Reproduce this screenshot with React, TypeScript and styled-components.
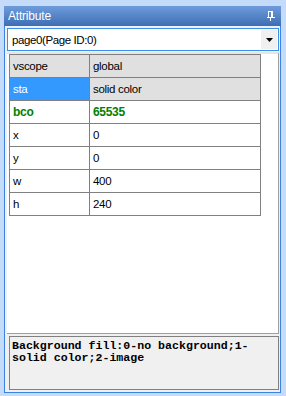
import React from "react";
import styled, { createGlobalStyle } from "styled-components";

const Global = createGlobalStyle`
  html, body { margin: 0; padding: 0; }
  body { background: #c4dbf9; }
  #root { width: 286px; height: 396px; }
`;

const Window = styled.div`
  box-sizing: border-box;
  width: 286px;
  height: 396px;
  background: #c4dbf9;
  padding: 6px 5px 3px 4px;
  display: flex;
  flex-direction: column;
  font-family: "Liberation Sans", Arial, sans-serif;
  font-size: 11px;
`;

const TitleBar = styled.div`
  height: 20px;
  flex: none;
  display: flex;
  align-items: center;
  justify-content: space-between;
  padding: 0 6px 0 4px;
  background: linear-gradient(#6e9cdc, #3e6db3);
  color: #ffffff;
  font-size: 12px;
  letter-spacing: -0.2px;
`;

const Panel = styled.div`
  flex: 1;
  display: flex;
  flex-direction: column;
  background: #f0f0f0;
  border: 1px solid #3d82e0;
  border-top: none;
  padding: 2px 1px 2px 2px;
  min-height: 0;
`;

const Combo = styled.div`
  box-sizing: border-box;
  height: 23px;
  flex: none;
  display: flex;
  align-items: center;
  justify-content: space-between;
  background: #ffffff;
  border: 1px solid #3c8fe9;
  padding: 0 1px 0 4px;
  color: #000;
  font-size: 11.5px;
  letter-spacing: -0.4px;
`;

const DropButton = styled.div`
  width: 16px;
  height: 19px;
  background: #f0f0f0;
  display: flex;
  align-items: center;
  justify-content: center;
`;

const GridArea = styled.div`
  flex: 1;
  margin-top: 1px;
  background: #ffffff;
  border-top: 2px solid #e6e6e6;
  border-right: 1px solid #a0a0a0;
  border-bottom: 1px solid #a0a0a0;
  padding: 0 0 0 2px;
`;

const Table = styled.table`
  border-collapse: collapse;
  width: 251px;
  table-layout: fixed;
`;

const Row = styled.tr<{ $shaded?: boolean }>`
  height: 23px;
  background: ${(p) => (p.$shaded ? "#e0e0e0" : "#ffffff")};
`;

const Cell = styled.td<{ $selected?: boolean; $bold?: boolean }>`
  box-sizing: border-box;
  border: 1px solid #808080;
  padding: 0 0 0 3px;
  height: 23px;
  font-size: ${(p) => (p.$bold ? "12px" : "11.5px")};
  font-weight: ${(p) => (p.$bold ? "bold" : "normal")};
  color: ${(p) => (p.$selected ? "#ffffff" : p.$bold ? "#008000" : "#000000")};
  background: ${(p) => (p.$selected ? "#3399ff" : "transparent")};
  letter-spacing: -0.3px;
  white-space: nowrap;
`;

const HelpBox = styled.div`
  box-sizing: border-box;
  height: 54px;
  flex: none;
  margin-top: 2px;
  margin-left: 2px;
  border: 1px solid #808080;
  background: #f0f0f0;
  padding: 3px 2px;
  font-family: "Liberation Mono", "Courier New", monospace;
  font-weight: bold;
  font-size: 11.6px;
  line-height: 12px;
  color: #000;
  white-space: pre;
`;

const rows: { k: string; v: string; shaded?: boolean; sel?: boolean; bold?: boolean }[] = [
  { k: "vscope", v: "global", shaded: true },
  { k: "sta", v: "solid color", shaded: true, sel: true },
  { k: "bco", v: "65535", bold: true },
  { k: "x", v: "0" },
  { k: "y", v: "0" },
  { k: "w", v: "400" },
  { k: "h", v: "240" },
];

export default function App() {
  return (
    <>
      <Global />
      <Window>
        <TitleBar>
          <span>Attribute</span>
          <svg width="8" height="10" viewBox="0 0 8 10">
            <rect x="1" y="0" width="5" height="1" fill="#fff" />
            <rect x="1" y="0" width="1" height="6" fill="#fff" />
            <rect x="4" y="0" width="2" height="6" fill="#fff" />
            <rect x="0" y="6" width="8" height="1" fill="#fff" />
            <rect x="3" y="7" width="1" height="3" fill="#fff" />
          </svg>
        </TitleBar>
        <Panel>
          <Combo>
            <span>page0(Page ID:0)</span>
            <DropButton>
              <svg width="7" height="4" viewBox="0 0 7 4">
                <path d="M0 0H7L3.5 4Z" fill="#000" />
              </svg>
            </DropButton>
          </Combo>
          <GridArea>
            <Table>
              <colgroup>
                <col style={{ width: 80 }} />
                <col style={{ width: 171 }} />
              </colgroup>
              <tbody>
                {rows.map((r) => (
                  <Row key={r.k} $shaded={r.shaded}>
                    <Cell $selected={r.sel} $bold={r.bold}>{r.k}</Cell>
                    <Cell $bold={r.bold}>{r.v}</Cell>
                  </Row>
                ))}
              </tbody>
            </Table>
          </GridArea>
          <HelpBox>{"Background fill:0-no background;1-\nsolid color;2-image"}</HelpBox>
        </Panel>
      </Window>
    </>
  );
}
